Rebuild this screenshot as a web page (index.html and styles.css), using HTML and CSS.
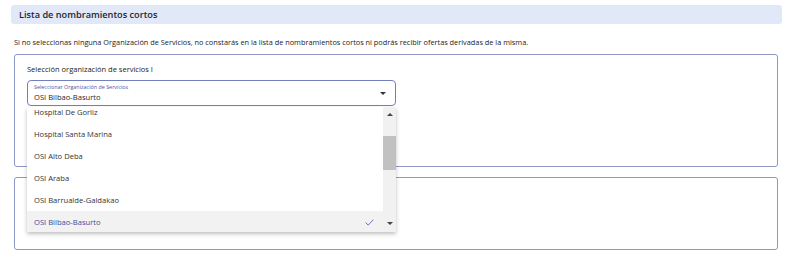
FILE: index.html
```html
<!DOCTYPE html>
<html lang="es">
<head>
    <meta charset="UTF-8">
    <meta name="viewport" content="width=device-width, initial-scale=1.0">
    <title>Lista de nombramientos cortos</title>
    <link rel="stylesheet" href="styles.css">
</head>
<body>
    <div class="section-title">Lista de nombramientos cortos</div>
    <p class="notice">Si no seleccionas ninguna Organización de Servicios, no constarás en la lista de nombramientos cortos ni podrás recibir ofertas derivadas de la misma.</p>

    <div class="panel panel-first">
        <div class="panel-title">Selección organización de servicios I</div>
        <div class="select-wrap">
            <div class="select">
                <div class="select-text">
                    <span class="select-label">Seleccionar Organización de Servicios</span>
                    <span class="select-value">OSI Bilbao-Basurto</span>
                </div>
                <span class="caret"></span>
            </div>
            <div class="dropdown">
                <ul class="options">
                    <li>Hospital De Gorliz</li>
                    <li>Hospital Santa Marina</li>
                    <li>OSI Alto Deba</li>
                    <li>OSI Araba</li>
                    <li>OSI Barrualde-Galdakao</li>
                    <li class="selected">OSI Bilbao-Basurto
                        <svg class="check" width="9" height="7" viewBox="0 0 9 7"><path d="M0.6 3.6 L3.2 6.1 L8.4 0.7" fill="none" stroke="#5a64b0" stroke-width="0.9"/></svg>
                    </li>
                </ul>
                <div class="scrollbar">
                    <span class="arrow-up"></span>
                    <span class="thumb"></span>
                    <span class="arrow-down"></span>
                </div>
            </div>
        </div>
    </div>

    <div class="panel panel-second"></div>
</body>
</html>
```
FILE: styles.css
```css
body {
    font-family: 'Open Sans', 'Liberation Sans', sans-serif;
    margin: 0;
    padding: 5px 18px 0 11px;
    background-color: #ffffff;
    color: #222;
}

.section-title {
    height: 19px;
    line-height: 19px;
    background: #e1e9f8;
    border-radius: 3px;
    padding-left: 8px;
    font-size: 9.2px;
    font-weight: 600;
    color: #1f2430;
}

.notice {
    margin: 12px 0 0 3px;
    font-size: 7.35px;
    line-height: 12px;
    color: #222;
}

.panel {
    margin-left: 3px;
    margin-right: 4px;
    border: 1px solid #8d98c6;
    border-radius: 3px;
    box-sizing: border-box;
}

.panel-first {
    margin-top: 6px;
    height: 113px;
    padding: 8px 12px 0 12px;
}

.panel-second {
    margin-top: 10px;
    height: 73px;
}

.panel-title {
    font-size: 7.5px;
    line-height: 12px;
    color: #222;
}

.select-wrap {
    position: relative;
    width: 369px;
    margin-top: 5px;
}

.select {
    height: 26px;
    box-sizing: border-box;
    border: 1px solid #7480bd;
    border-radius: 4px;
    display: flex;
    align-items: center;
    justify-content: space-between;
    padding: 0 9px 0 6px;
}

.select-text {
    display: flex;
    flex-direction: column;
}

.select-label {
    font-size: 5.4px;
    line-height: 7px;
    color: #4a56a8;
}

.select-value {
    font-size: 7.6px;
    line-height: 12px;
    color: #1f1f1f;
}

.caret {
    width: 0;
    height: 0;
    border-left: 3px solid transparent;
    border-right: 3px solid transparent;
    border-top: 3px solid #333;
}

.dropdown {
    position: absolute;
    top: 27px;
    left: 0;
    width: 369px;
    height: 125px;
    background: #ffffff;
    box-shadow: 0 2px 4px rgba(0, 0, 0, 0.25);
    display: flex;
    overflow: hidden;
}

.options {
    list-style: none;
    margin: -6px 0 0 0;
    padding: 0;
    flex: 1;
}

.options li {
    height: 22px;
    line-height: 22px;
    padding-left: 7px;
    font-size: 7.6px;
    color: #333;
    position: relative;
}

.options li.selected {
    background: #f2f2f2;
    color: #3f4a9e;
}

.check {
    position: absolute;
    right: 9px;
    top: 8px;
}

.scrollbar {
    width: 13px;
    background: #f1f1f1;
    display: flex;
    flex-direction: column;
    align-items: center;
}

.arrow-up {
    width: 0;
    height: 0;
    margin-top: 6px;
    border-left: 3px solid transparent;
    border-right: 3px solid transparent;
    border-bottom: 3px solid #444;
}

.thumb {
    width: 13px;
    height: 34px;
    margin-top: 20px;
    background: #c1c1c1;
}

.arrow-down {
    width: 0;
    height: 0;
    margin-top: auto;
    margin-bottom: 7px;
    border-left: 3px solid transparent;
    border-right: 3px solid transparent;
    border-top: 3px solid #444;
}
```
